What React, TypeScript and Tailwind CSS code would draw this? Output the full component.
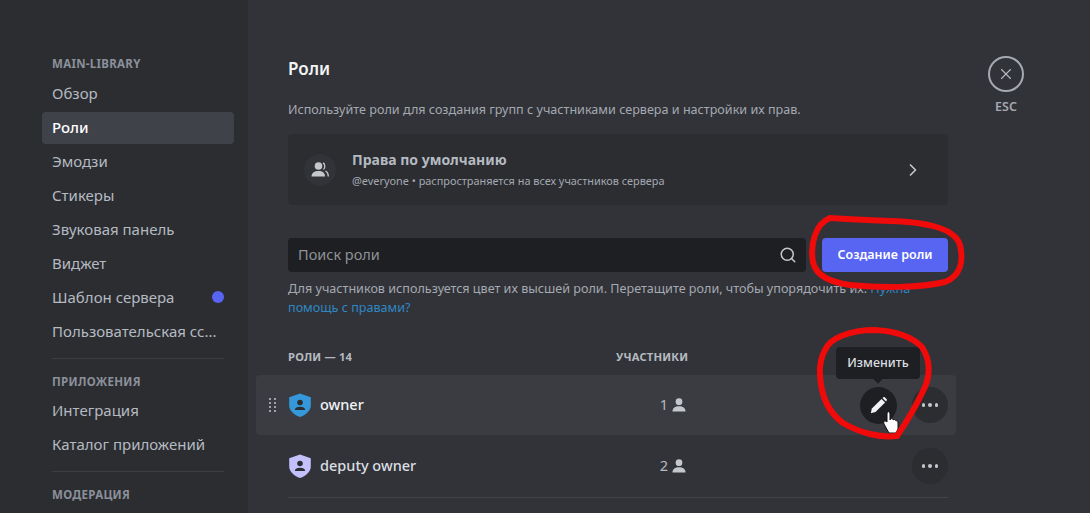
import { ChevronRight, Search, X } from 'lucide-react';

const font = { fontFamily: '"Noto Sans", "Open Sans", sans-serif' };

function NavItem({ label, active, dot }: { label: string; active?: boolean; dot?: boolean }) {
  return (
    <div
      className={`h-8 mb-[2px] px-[10px] pb-[2px] rounded flex items-center justify-between text-[15px] leading-5 whitespace-nowrap ${
        active ? 'bg-[#404249] text-white font-medium' : 'text-[#b5bac1]'
      }`}
    >
      <span>{label}</span>
      {dot && <span className="w-3 h-3 rounded-full bg-[#5865f2]" />}
    </div>
  );
}

function NavHeading({ label }: { label: string }) {
  return (
    <div className="h-[22px] px-[10px] text-[11.5px] leading-[18px] font-bold tracking-[0.3px] uppercase text-[#8c909a]">
      {label}
    </div>
  );
}

function Shield({ color }: { color: string }) {
  return (
    <svg width="24" height="24" viewBox="0 0 24 24" className="shrink-0">
      <path
        d="M12 0.5 22.8 4.200V12.500C22.800 18 17.500 22 12 24 6.500 22 1.200 18 1.200 12.500V4.200Z"
        fill={color}
      />
      <circle cx="12" cy="9.500" r="2.800" fill="#2b2d31" />
      <path d="M6.800 17C7 14.800 9 13.800 12 13.800S17 14.800 17.200 17Z" fill="#2b2d31" />
    </svg>
  );
}

function PersonIcon() {
  return (
    <svg width="14" height="14" viewBox="0 0 15 15">
      <circle cx="7.500" cy="4" r="3.600" fill="#c4c7cc" />
      <path d="M0.500 14.500C0.500 10.500 3.500 8.800 7.500 8.800S14.500 10.500 14.500 14.500Z" fill="#c4c7cc" />
    </svg>
  );
}

function Dots({ className }: { className: string }) {
  return (
    <div className={`w-9 h-9 rounded-full flex items-center justify-center gap-[3px] ${className}`}>
      <span className="w-[3.500px] h-[3.500px] rounded-full bg-[#c4c7cc]" />
      <span className="w-[3.500px] h-[3.500px] rounded-full bg-[#c4c7cc]" />
      <span className="w-[3.500px] h-[3.500px] rounded-full bg-[#c4c7cc]" />
    </div>
  );
}

export default function App() {
  return (
    <div className="relative w-[1090px] h-[513px] overflow-hidden flex bg-[#313338]" style={font}>
      <aside className="w-[248px] shrink-0 bg-[#2b2d31] pt-[55px] pl-[42px] pr-[14px]">
        <NavHeading label="main-library" />
        <div className="mt-px">
          <NavItem label="Обзор" />
          <NavItem label="Роли" active />
          <NavItem label="Эмодзи" />
          <NavItem label="Стикеры" />
          <NavItem label="Звуковая панель" />
          <NavItem label="Виджет" />
          <NavItem label="Шаблон сервера" dot />
          <NavItem label="Пользовательская сс..." />
        </div>
        <div className="mx-[10px] mt-[10px] mb-[14px] h-px bg-[#3c3e44]" />
        <NavHeading label="приложения" />
        <NavItem label="Интеграция" />
        <NavItem label="Каталог приложений" />
        <div className="mx-[10px] mt-[10px] mb-[14px] h-px bg-[#3c3e44]" />
        <NavHeading label="модерация" />
      </aside>

      <main className="flex-1 pl-[40px] pt-[57px] flex items-start">
        <div className="w-[660px] shrink-0">
          <h1 className="text-[17px] leading-[24px] font-semibold text-[#f2f3f5]">Роли</h1>
          <p className="mt-[19px] text-[12.600px] leading-[20px] text-[#a5a9b1] whitespace-nowrap">
            Используйте роли для создания групп с участниками сервера и настройки их прав.
          </p>

          <div className="mt-[14px] h-[71px] bg-[#2b2d31] rounded flex items-center pl-[16px] pr-[25px]">
            <div className="w-8 h-8 rounded-full bg-[#313338] flex items-center justify-center">
              <svg width="18" height="16" viewBox="0 0 18 16">
                <circle cx="7.500" cy="4" r="3.800" fill="#c4c7cc" />
                <path d="M0.500 14.500C0.500 10.800 3.500 9 7.500 9S14 10.800 14 14.500Z" fill="#c4c7cc" />
                <path d="M12 1C14 1.500 14.500 6 12.500 7.500M14.500 9C16.500 10 17.300 12 17.300 14.500" stroke="#c4c7cc" strokeWidth="1.300" fill="none" />
              </svg>
            </div>
            <div className="ml-[16px] flex-1">
              <div className="text-[14px] leading-[20px] font-bold text-[#b5bac1]">Права по умолчанию</div>
              <div className="mt-[3px] text-[10.900px] leading-[16px] text-[#a5a9b1]">
                @everyone • распространяется на всех участников сервера
              </div>
            </div>
            <ChevronRight size={20} className="text-[#c4c7cc]" />
          </div>

          <div className="mt-[33px] flex gap-[16px]">
            <div className="flex-1 h-[34px] bg-[#1e1f22] rounded flex items-center justify-between pl-[10px] pr-[9px]">
              <span className="text-[14.500px] text-[#8e9297]">Поиск роли</span>
              <Search size={18} className="text-[#c4c7cc]" />
            </div>
            <button className="w-[126px] h-[34px] bg-[#5865f2] rounded text-white text-[12.500px] font-semibold">
              Создание роли
            </button>
          </div>

          <p className="mt-[7px] text-[12.600px] leading-[19px] text-[#a5a9b1] whitespace-nowrap">
            <span>Для участников используется цвет их высшей роли. Перетащите роли, чтобы упорядочить их. </span>
            <span className="text-[#2f87c4]">Нужна</span>
            <br />
            <span className="text-[#2f87c4]">помощь с правами?</span>
          </p>

          <div className="mt-[31px] h-[18px] flex items-center text-[11.200px] font-bold tracking-[0.2px] text-[#b5bac1]">
            <span className="w-[328px]">РОЛИ — 14</span>
            <span>УЧАСТНИКИ</span>
          </div>

          <div className="-ml-[32px] -mr-[8px] mt-[9px] h-[60px] bg-[#3a3c42] rounded flex items-center relative">
            <div className="w-[32px] flex justify-center pl-[2px] pr-[2px]">
              <div className="grid grid-cols-2 gap-x-[3px] gap-y-[2px]">
                {[0, 1, 2, 3, 4, 5, 6, 7].map((n) => (
                  <span key={n} className="w-[2px] h-[2px] bg-[#9da1a9]" />
                ))}
              </div>
            </div>
            <Shield color="#3498db" />
            <span className="ml-[8px] text-[14.500px] font-medium text-[#f2f3f5]">owner</span>
            <div className="ml-auto mr-[270px] flex items-center gap-[4px] text-[14.500px] text-[#b5bac1]">
              1 <PersonIcon />
            </div>
            <div className="absolute right-[59px] w-[37px] h-[37px] rounded-full bg-[#1e1f22] flex items-center justify-center">
              <svg width="17" height="17" viewBox="0 0 18 18">
                <path d="M0.800 17.200 2 12.200 12.200 2 16 5.800 5.800 16Z" fill="#f2f3f5" />
                <path d="M13.200 1 14 0.400C14.600 0 15.300 0 15.800 0.500L17.500 2.200C18 2.700 18 3.400 17.600 4L17 4.800Z" fill="#f2f3f5" />
              </svg>
            </div>
            <Dots className="absolute right-[8px] bg-[#2b2d31]" />
          </div>

          <div className="h-[63px] border-b border-[#42444a] flex items-center">
            <Shield color="#c3c0fb" />
            <span className="ml-[8px] text-[14.500px] font-medium text-[#dbdee1]">deputy owner</span>
            <div className="ml-auto mr-[226px] flex items-center gap-[4px] text-[14.500px] text-[#b5bac1]">
              2 <PersonIcon />
            </div>
            <Dots className="bg-[#2b2d31]" />
          </div>
        </div>

        <div className="ml-[40px] -mt-[1px] flex flex-col items-center w-[36px]">
          <div className="w-9 h-9 rounded-full border-2 border-[#a5a9b1] flex items-center justify-center">
            <X size={18} strokeWidth={1.500} className="text-[#b5bac1]" />
          </div>
          <span className="mt-[7px] text-[12.500px] leading-[16px] font-semibold text-[#a5a9b1]">ESC</span>
        </div>
      </main>

      {/* tooltip over the pencil button */}
      <div className="absolute left-[836px] top-[347px] w-[84px] h-[32px] rounded bg-[#1e1f22] flex items-center justify-center text-[12.500px] font-medium text-[#dbdee1]">
        Изменить
        <span className="absolute -bottom-[3px] left-[38px] w-2 h-2 rotate-45 bg-[#1e1f22]" />
      </div>

      {/* hand cursor and the red marker scribbles drawn on the screenshot */}
      <svg className="absolute inset-0 pointer-events-none" width="1090" height="513" viewBox="0 0 1090 513">
        <path
          d="M889 433 884 424C883 421 885 420 887 422V414C887 411 890 411 890 414V420C891 418 893 418 893 420 894 419 896 419 896 421 897 420 898 421 898 423V429L896 433Z"
          fill="#ffffff"
          stroke="#111111"
          strokeWidth="1"
        />
        <path
          d="M830 218C815 224 810 245 813 262 816 276 830 282 850 285 880 288 920 288 945 282 960 276 964 262 960 245 955 228 925 222 890 221 865 220 845 219 830 218"
          fill="none"
          stroke="#f00a0a"
          strokeWidth="6"
          strokeLinecap="round"
        />
        <path
          d="M825 350C830 338 850 330 875 330 895 331 912 337 922 347 929 358 931 372 925 387 918 402 908 420 897 436 880 438 860 433 843 423 828 412 821 395 820 375 819 365 822 355 825 350"
          fill="none"
          stroke="#f00a0a"
          strokeWidth="6"
          strokeLinecap="round"
        />
      </svg>
    </div>
  );
}
